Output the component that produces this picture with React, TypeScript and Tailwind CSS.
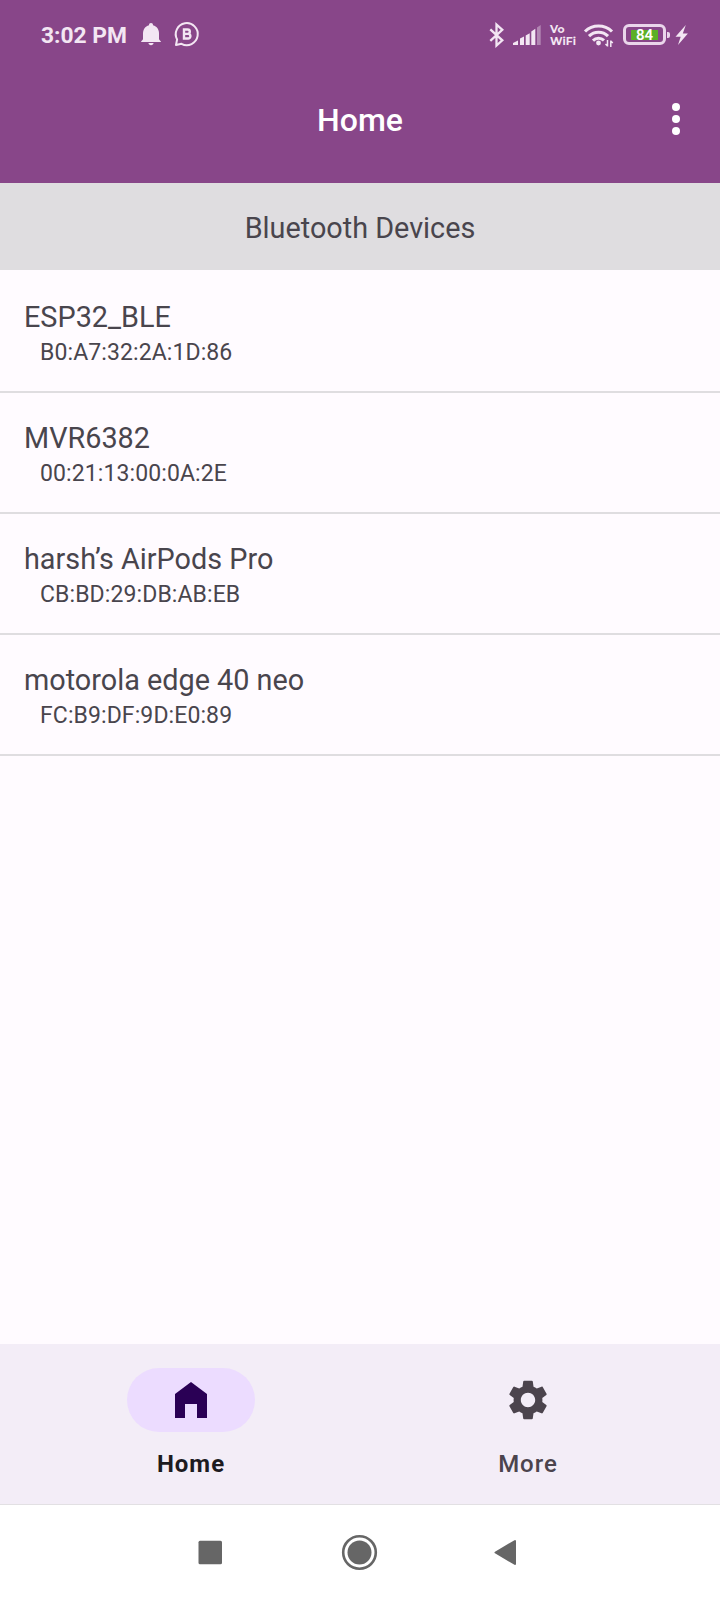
import type { ReactNode } from "react";

const devices = [
  { name: "ESP32_BLE", address: "B0:A7:32:2A:1D:86" },
  { name: "MVR6382", address: "00:21:13:00:0A:2E" },
  { name: "harsh’s AirPods Pro", address: "CB:BD:29:DB:AB:EB" },
  { name: "motorola edge 40 neo", address: "FC:B9:DF:9D:E0:89" },
];

function StatusBar() {
  return (
    <div className="flex h-[68px] shrink-0 items-center pl-[41px] text-[#f3e6f3]">
      <span className="w-[98px] whitespace-nowrap pt-[3px] text-[22.8px] leading-[28px] font-bold">3:02 PM</span>
      <svg width="24" height="28" viewBox="139 20 24 28" fill="currentColor">
        <path d="M151 23c-1.300 0-2 .9-2 2.200-4 1-6 4.200-6 8.300v5.500c0 1-2 2-2 3h20c0-1-2-2-2-3v-5.500c0-4.100-2-7.300-6-8.300 0-1.300-.7-2.200-2-2.200z" />
        <path d="M148.500 43h5c0 1.300-1.100 2.200-2.500 2.200s-2.500-.9-2.500-2.200z" />
      </svg>
      <svg className="ml-[10px]" width="28" height="28" viewBox="173 20 28 28" fill="none" stroke="currentColor" strokeWidth="2">
        <path d="M176 45l1.100-5.600a11 11 0 1 1 4.400 4.400z" strokeLinejoin="round" />
        <path d="M184 29.500h3.600a2.200 2.200 0 0 1 0 4.400H184h4.100a2.300 2.300 0 0 1 0 4.600H184z" strokeWidth="2.400" />
      </svg>
      <div className="ml-[287px] flex items-center">
        <svg width="18" height="28" viewBox="488.500 20 18 28" fill="none" stroke="currentColor" strokeWidth="2.300">
          <path d="M490.800 29.300l12 11L497 45.500v-21l5.800 5.300-12 11" />
        </svg>
        <svg className="ml-[6px]" width="30" height="28" viewBox="512 20 30 28" fill="currentColor">
          <path d="M513 45v-2l5-2.500V45zM520 45v-6.500l4-2V45zM525.700 45v-9.500l4-2.300V45zM531.300 45V31.500l4-2.700V45z" />
          <path d="M537 45V27.500l3.700-2.500v20z" opacity=".4" />
        </svg>
        <div className="ml-[8px] flex h-[28px] w-[27px] flex-col pt-[4px] font-['Montserrat','Open_Sans',sans-serif] text-[10.8px] leading-[12px] font-bold">
          <span>Vo</span>
          <span>WiFi</span>
        </div>
        <svg className="ml-[6px]" width="31" height="28" viewBox="583 20 31 28" fill="none" stroke="currentColor" strokeWidth="3.100">
          <path d="M585 31.500a19.300 19.300 0 0 1 27 0M589 36.200a13.500 13.500 0 0 1 19 0M593 40.600a8 8 0 0 1 11-.200" />
          <circle cx="598.500" cy="43" r="2.400" fill="currentColor" stroke="none" />
          <path d="M607.500 40v6.500m-2-2.500l2 2M610.800 47v-6.500m2 2.500l-2-2" strokeWidth="1.500" />
        </svg>
        <div className="mt-[1px] ml-[9px] flex h-[21px] w-[43px] items-center justify-center rounded-[6px] border-[3px] border-[#ead6eb]">
          <div className="flex h-[10px] w-[27px] items-center justify-center bg-[#5bb026]">
            <span className="text-[15px] leading-[10px] font-semibold text-white">84</span>
          </div>
        </div>
        <div className="mt-[1px] ml-[1px] h-[6px] w-[3px] rounded-r-[2px] bg-[#ead6eb]" />
        <svg className="ml-[5px]" width="14" height="28" viewBox="675 20 14 28" fill="currentColor">
          <path d="M685.800 25l-10.300 11.700h5.200L678 45l9.900-11.500h-5.100z" />
        </svg>
      </div>
    </div>
  );
}

function NavItem({ label, active, children }: { label: string; active?: boolean; children: ReactNode }) {
  return (
    <div className="flex w-[336px] flex-col items-center pt-[24px]">
      <div className={active ? "flex h-16 w-32 items-center justify-center rounded-full bg-[#ecdcff] text-[#2a0055]" : "flex h-16 w-32 items-center justify-center text-[#4b444d]"}>
        {children}
      </div>
      <span className={active ? "mt-[18px] text-[24px] leading-[28px] font-bold tracking-[1px] text-[#1d1b1f]" : "mt-[18px] text-[24px] leading-[28px] font-medium tracking-[1px] text-[#4b444d]"}>
        {label}
      </span>
    </div>
  );
}

export default function App() {
  return (
    <div className="flex h-[1600px] w-[720px] flex-col overflow-hidden bg-[#fffbff] font-['Roboto',sans-serif] text-[#49454d]">
      <header className="flex h-[183px] shrink-0 flex-col bg-[#884689]">
        <StatusBar />
        <div className="flex h-[102px] items-center">
          <div className="w-[80px]" />
          <h1 className="flex-1 pt-[2px] text-center text-[32px] leading-[40px] font-medium text-white">Home</h1>
          <svg className="mr-[36px]" width="44" height="40" viewBox="-24 0 44 40" fill="white">
            <circle cx="12" cy="8" r="4" />
            <circle cx="12" cy="20" r="4" />
            <circle cx="12" cy="32" r="4" />
          </svg>
        </div>
      </header>

      <div className="flex h-[87px] shrink-0 items-center justify-center bg-[#dfdde0]">
        <h2 className="pt-[2px] text-[28.8px] leading-[34px]">Bluetooth Devices</h2>
      </div>

      <ul className="flex-1">
        {devices.map((device) => (
          <li key={device.address} className="flex h-[121px] flex-col border-b-2 border-[#dfdde0] pt-[27px] pl-6 first:h-[123px] first:pt-[29px]">
            <span className="text-[28.8px] leading-[36px]">{device.name}</span>
            <span className="mt-[4px] pl-4 text-[23px] leading-[28px] tracking-[0.1px]">{device.address}</span>
          </li>
        ))}
      </ul>

      <nav className="flex h-[160px] shrink-0 gap-px bg-[#f3edf7] pl-[23px]">
        <NavItem label="Home" active>
          <svg width="32" height="36" viewBox="0 0 32 36" fill="currentColor">
            <path d="M16 0L0 12v24h10V22h12v14h10V12z" />
          </svg>
        </NavItem>
        <NavItem label="More">
          <svg width="48" height="48" viewBox="0 0 24 24" fill="currentColor">
            <path d="M19.140 12.940c.04-.3.06-.61.06-.94 0-.32-.02-.64-.07-.94l2.030-1.580c.18-.14.23-.41.12-.61l-1.920-3.320c-.12-.22-.37-.29-.59-.22l-2.390.96c-.5-.38-1.030-.7-1.620-.94l-.36-2.540c-.04-.24-.24-.41-.48-.41h-3.840c-.24 0-.43.17-.47.41l-.36 2.540c-.59.24-1.130.57-1.620.94l-2.390-.96c-.22-.08-.47 0-.59.22L2.740 8.870c-.12.21-.08.47.12.61l2.030 1.580c-.05.3-.09.63-.09.94s.02.64.07.94l-2.030 1.580c-.18.14-.23.41-.12.61l1.920 3.320c.12.22.37.29.59.22l2.390-.96c.5.38 1.030.7 1.620.94l.36 2.540c.05.24.24.41.48.41h3.840c.24 0 .44-.17.47-.41l.36-2.540c.59-.24 1.130-.56 1.620-.94l2.390.96c.22.08.47 0 .59-.22l1.920-3.320c.12-.22.07-.47-.12-.61l-2.010-1.580zM12 15.600c-1.980 0-3.600-1.620-3.600-3.600s1.620-3.600 3.600-3.600 3.600 1.620 3.600 3.600-1.620 3.600-3.600 3.600z" />
          </svg>
        </NavItem>
      </nav>

      <div className="flex h-[96px] shrink-0 items-center border-t border-[#e2e0e3] bg-white pl-[198px] text-[#666666]">
        <svg width="25" height="26" viewBox="0 0 25 26" fill="currentColor">
          <rect x=".5" y=".7" width="23.500" height="23.500" rx="1.500" />
        </svg>
        <svg className="ml-[118px]" width="38" height="38" viewBox="-18.500 -18.500 38 38" fill="currentColor">
          <circle r="12" />
          <circle r="16.300" fill="none" stroke="currentColor" strokeWidth="2.600" />
        </svg>
        <svg className="ml-[115px]" width="25" height="28" viewBox="0 0 25 28" fill="currentColor" stroke="currentColor" strokeWidth="2" strokeLinejoin="round">
          <path d="M1.500 13.500L21 2v23z" />
        </svg>
      </div>
    </div>
  );
}
